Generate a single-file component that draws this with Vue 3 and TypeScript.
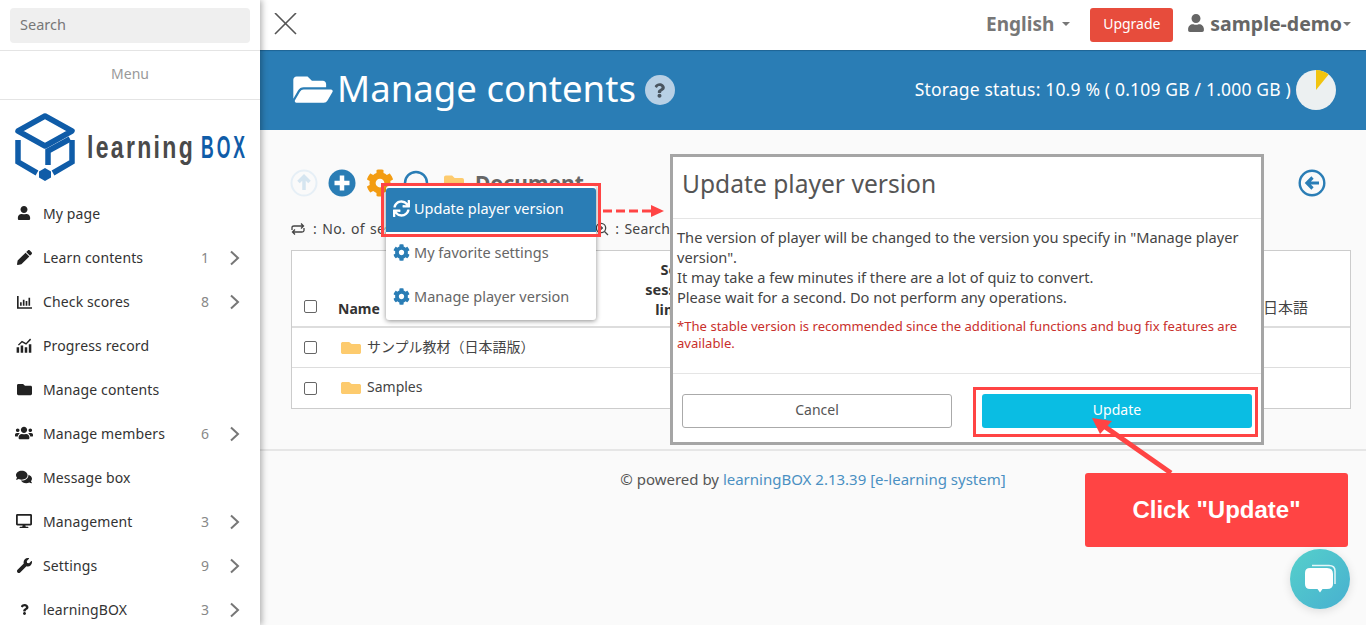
<script setup lang="ts">
const P = {
  user: 'M224 256c70.7 0 128-57.3 128-128S294.7 0 224 0 96 57.3 96 128s57.3 128 128 128zm89.6 32h-16.7c-22.2 10.2-46.9 16-72.9 16s-50.6-5.8-72.9-16h-16.7C60.2 288 0 348.2 0 422.4V464c0 26.5 21.5 48 48 48h352c26.5 0 48-21.5 48-48v-41.6c0-74.2-60.2-134.4-134.4-134.4z',
  pencil: 'M497.9 142.1l-46.1 46.1c-4.7 4.7-12.3 4.7-17 0l-111-111c-4.7-4.7-4.7-12.3 0-17l46.1-46.1c18.7-18.7 49.1-18.7 67.9 0l60.1 60.1c18.8 18.7 18.8 49.1 0 67.9zM284.2 99.8L21.6 362.4.4 483.9c-2.9 16.4 11.4 30.6 27.8 27.8l121.5-21.3 262.6-262.6c4.7-4.7 4.7-12.3 0-17l-111-111c-4.8-4.7-12.4-4.7-17.1 0z',
  chart: 'M0 64h56v384h456v56H0zM104 280h56v120h-56zM200 200h56v200h-56zM296 240h56v160h-56zM392 130h56v270h-56z',
  progress: 'M20 330h80v170H20zM150 270h80v230h-80zM280 330h80v170h-80zM410 230h80v270h-80zM60 250l130-130 130 70L450 50l34 34-160 160-130-70-100 100z',
  folder: 'M464 128H272l-64-64H48C21.49 64 0 85.49 0 112v288c0 26.51 21.49 48 48 48h416c26.51 0 48-21.49 48-48V176c0-26.51-21.49-48-48-48z',
  users: 'M96 224c35.3 0 64-28.7 64-64s-28.7-64-64-64-64 28.7-64 64 28.7 64 64 64zm448 0c35.3 0 64-28.7 64-64s-28.7-64-64-64-64 28.7-64 64 28.7 64 64 64zm32 32h-64c-17.6 0-33.5 7.1-45.1 18.6 40.3 22.1 68.9 62 75.1 109.4h66c17.7 0 32-14.3 32-32v-32c0-35.3-28.7-64-64-64zm-256 0c61.9 0 112-50.1 112-112S381.9 32 320 32 208 82.1 208 144s50.1 112 112 112zm76.8 32h-8.3c-20.8 10-43.9 16-68.5 16s-47.6-6-68.5-16h-8.3C179.6 288 128 339.6 128 403.2V432c0 26.5 21.5 48 48 48h288c26.5 0 48-21.5 48-48v-28.8c0-63.6-51.6-115.2-115.2-115.2zm-223.7-13.4C161.5 263.1 145.6 256 128 256H64c-35.3 0-64 28.7-64 64v32c0 17.7 14.3 32 32 32h65.9c6.3-47.4 34.9-87.3 75.2-109.4z',
  comments: 'M416 192c0-88.4-93.1-160-208-160S0 103.6 0 192c0 34.3 14.1 65.9 38 92-13.4 30.2-35.5 54.2-35.8 54.5-2.2 2.3-2.8 5.7-1.5 8.7S4.8 352 8 352c36.6 0 66.9-12.3 88.7-25 32.2 15.7 70.3 25 111.3 25 114.9 0 208-71.6 208-160zm122 220c23.9-26 38-57.7 38-92 0-66.9-53.5-124.2-129.3-148.1.9 6.6 1.3 13.3 1.3 20.1 0 105.9-107.7 192-240 192-10.8 0-21.3-.8-31.7-1.9C207.8 439.6 281.8 480 368 480c41 0 79.1-9.2 111.3-25 21.8 12.7 52.1 25 88.7 25 3.2 0 6.1-1.9 7.3-4.8 1.3-2.9.7-6.3-1.5-8.7-.3-.3-22.4-24.2-35.8-54.5z',
  desktop: 'M528 0H48C21.5 0 0 21.5 0 48v320c0 26.5 21.5 48 48 48h192l-16 48h-72c-13.3 0-24 10.7-24 24s10.7 24 24 24h272c13.3 0 24-10.7 24-24s-10.7-24-24-24h-72l-16-48h192c26.5 0 48-21.5 48-48V48c0-26.5-21.5-48-48-48zm-16 352H64V64h448z',
  wrench: 'M507.73 109.1c-2.24-9.03-13.54-12.09-20.12-5.51l-74.36 74.36-67.88-11.31-11.31-67.88 74.36-74.36c6.62-6.62 3.43-17.9-5.66-20.16-47.38-11.74-99.55.91-136.58 37.93-39.64 39.64-50.55 97.1-34.05 147.2L18.74 402.76c-24.99 24.99-24.99 65.51 0 90.5 24.99 24.99 65.51 24.99 90.5 0l213.21-213.21c50.12 16.71 107.47 5.68 147.37-34.22 37.07-37.07 49.7-89.32 37.91-136.73z',
  question: 'M202.021 0C122.202 0 70.503 32.703 29.914 91.026c-7.363 10.58-5.093 25.086 5.178 32.874l43.138 32.709c10.373 7.865 25.132 6.026 33.253-4.148 25.049-31.381 43.63-49.449 82.757-49.449 30.764 0 68.816 19.799 68.816 49.631 0 22.552-18.617 34.134-48.993 51.164-35.423 19.86-82.299 44.576-82.299 106.405V320c0 13.255 10.745 24 24 24h72.471c13.255 0 24-10.745 24-24v-5.773c0-42.86 125.268-44.645 125.268-160.627C377.504 66.256 286.902 0 202.021 0zM192 373.459c-38.196 0-69.271 31.075-69.271 69.271 0 38.195 31.075 69.27 69.271 69.27s69.271-31.075 69.271-69.271-31.075-69.27-69.271-69.27z',
  cog: 'M487.4 315.7l-42.6-24.6c4.3-23.2 4.3-47 0-70.2l42.6-24.6c4.9-2.8 7.1-8.6 5.5-14-11.1-35.6-30-67.8-54.7-94.6-3.8-4.1-10-5.1-14.8-2.3L380.8 110c-17.9-15.4-38.5-27.3-60.8-35.1V25.8c0-5.6-3.9-10.5-9.4-11.7-36.7-8.2-74.3-7.8-109.2 0-5.5 1.2-9.4 6.1-9.4 11.7V75c-22.2 7.9-42.8 19.8-60.8 35.1L88.7 85.5c-4.9-2.8-11-1.9-14.8 2.3-24.7 26.7-43.6 58.9-54.7 94.6-1.7 5.4.6 11.2 5.5 14L67.3 221c-4.3 23.2-4.3 47 0 70.2l-42.6 24.6c-4.9 2.8-7.1 8.6-5.5 14 11.1 35.6 30 67.8 54.7 94.6 3.8 4.1 10 5.1 14.8 2.3l42.6-24.6c17.9 15.4 38.5 27.3 60.8 35.1v49.2c0 5.6 3.9 10.5 9.4 11.7 36.7 8.2 74.3 7.8 109.2 0 5.5-1.2 9.4-6.1 9.4-11.7v-49.2c22.2-7.9 42.8-19.8 60.8-35.1l42.6 24.6c4.9 2.8 11 1.9 14.8-2.3 24.7-26.7 43.6-58.9 54.7-94.6 1.5-5.5-.7-11.3-5.6-14.1zM256 336c-44.1 0-80-35.9-80-80s35.9-80 80-80 80 35.9 80 80-35.9 80-80 80z',
  sync: 'M440.65 12.57l4 82.77A247.16 247.16 0 0 0 255.83 8C134.73 8 33.91 94.92 12.29 209.82A12 12 0 0 0 24.09 224h49.05a12 12 0 0 0 11.67-9.26 175.91 175.91 0 0 1 317-56.94l-101.46-4.86a12 12 0 0 0-12.57 12v47.41a12 12 0 0 0 12 12H500a12 12 0 0 0 12-12V12a12 12 0 0 0-12-12h-47.37a12 12 0 0 0-11.98 12.57zM255.83 432a175.61 175.61 0 0 1-146-77.8l101.8 4.87a12 12 0 0 0 12.57-12v-47.4a12 12 0 0 0-12-12H12a12 12 0 0 0-12 12V500a12 12 0 0 0 12 12h47.35a12 12 0 0 0 12-12.6l-4.15-82.57A247.17 247.17 0 0 0 255.83 504c121.11 0 221.93-86.92 243.55-201.82a12 12 0 0 0-11.8-14.18h-49.05a12 12 0 0 0-11.67 9.26A175.86 175.86 0 0 1 255.83 432z',
  open: 'M572.694 292.093L500.27 416.248A63.997 63.997 0 0 1 444.989 448H45.025c-18.523 0-30.064-20.093-20.731-36.093l72.424-124.155A64 64 0 0 1 152 256h399.964c18.523 0 30.064 20.093 20.73 36.093zM152 224h328v-48c0-26.51-21.49-48-48-48H272l-64-64H48C21.49 64 0 85.49 0 112v278.046l69.077-118.418C86.214 242.25 117.989 224 152 224z',
}

const menu = [
  { label: 'My page', d: P.user, vb: '0 0 448 512', w: 14 },
  { label: 'Learn contents', d: P.pencil, vb: '0 0 512 512', w: 15, n: 1 },
  { label: 'Check scores', d: P.chart, vb: '0 0 512 512', w: 15, n: 8 },
  { label: 'Progress record', d: P.progress, vb: '0 0 512 512', w: 16 },
  { label: 'Manage contents', d: P.folder, vb: '0 0 512 512', w: 15 },
  { label: 'Manage members', d: P.users, vb: '0 0 640 512', w: 18, n: 6 },
  { label: 'Message box', d: P.comments, vb: '0 0 576 512', w: 16 },
  { label: 'Management', d: P.desktop, vb: '0 0 576 512', w: 16, n: 3 },
  { label: 'Settings', d: P.wrench, vb: '0 0 512 512', w: 15, n: 9 },
  { label: 'learningBOX', d: P.question, vb: '0 0 384 512', w: 11, n: 3 },
]
const rows = ['サンプル教材（日本語版）', 'Samples']
const popItems = [
  { label: 'Update player version', d: P.sync, active: true },
  { label: 'My favorite settings', d: P.cog, active: false },
  { label: 'Manage player version', d: P.cog, active: false },
]
</script>

<template>
  <div class="page">
    <aside class="side">
      <div class="searchwrap"><div class="search">Search</div></div>
      <div class="menutitle">Menu</div>
      <div class="logo">
        <svg width="253" height="72" viewBox="0 0 253 72">
          <g fill="none" stroke="#0f5ca8" stroke-width="5.500">
            <path d="M38 4 65 19 38 34 11 19Z" stroke-linejoin="round"/>
            <path d="M11 28V50L30 61M65 28V50L46 61"/>
            <path d="M63 27 41 39V53"/>
          </g>
          <path d="M38 56l6 3.500v6l-6 3.500-6-3.500v-6z" fill="#0f5ca8"/>
          <text transform="translate(80 46) scale(.72 1)" class="lg1">learning</text>
          <text transform="translate(194 46) scale(.55 1)" class="lg2">BOX</text>
        </svg>
      </div>
      <nav class="nav">
        <div v-for="m in menu" :key="m.label" class="item">
          <span class="ic"><svg :width="m.w" :height="m.w" :viewBox="m.vb" fill="#222"><path :d="m.d"/></svg></span>
          <span class="lab">{{ m.label }}</span>
          <template v-if="m.n">
            <span class="num">{{ m.n }}</span>
            <svg class="chev" width="11" height="16" viewBox="0 0 11 16"><path d="M2 1.5 9 8 2 14.5" fill="none" stroke="#777" stroke-width="2"/></svg>
          </template>
        </div>
      </nav>
    </aside>

    <main class="main">
      <header class="top">
        <svg class="close" width="23" height="22" viewBox="0 0 23 22"><path d="M1 0 22 21M22 0 1 21" stroke="#555" stroke-width="1.6" fill="none"/></svg>
        <div class="topright">
          <span class="lang">English</span><i class="caret c1"></i>
          <span class="upg">Upgrade</span>
          <svg class="uic" width="16" height="18" viewBox="0 0 448 512" fill="#666"><path :d="P.user"/></svg>
          <span class="uname">sample-demo</span><i class="caret c2"></i>
        </div>
      </header>

      <section class="band">
        <svg width="40" height="35" viewBox="0 0 576 512" fill="#fff" class="bandic"><path :d="P.open"/></svg>
        <h1>Manage contents</h1>
        <span class="help"><svg width="11" height="15" viewBox="0 0 384 512" fill="#4a5560"><path :d="P.question"/></svg></span>
        <div class="storage">
          <span class="stxt">Storage status: 10.9 % ( 0.109 GB / 1.000 GB )</span>
          <svg width="40" height="40" viewBox="0 0 40 40"><circle cx="20" cy="20" r="20" fill="#ecf0f1"/><path d="M20 20V0A20 20 0 0 1 32.6 4.5Z" fill="#f1c40f"/></svg>
        </div>
      </section>

      <section class="content">
        <div class="tools">
          <svg width="28" height="28" viewBox="0 0 28 28" class="t1"><circle cx="14" cy="14" r="12.5" fill="none" stroke="#e6eff6" stroke-width="2"/><path d="M14 21V8M8.5 13 14 7.5 19.500 13" fill="none" stroke="#d5e5f0" stroke-width="3.500"/></svg>
          <svg width="28" height="28" viewBox="0 0 28 28" class="t2"><circle cx="14" cy="14" r="13.500" fill="#2a7db5"/><path d="M14 6.500V21.500M6.500 14H21.500" stroke="#fff" stroke-width="4.500"/></svg>
          <svg width="28" height="28" viewBox="0 0 512 512" fill="#f39c12" class="t3"><path :d="P.cog"/></svg>
          <svg width="26" height="26" viewBox="0 0 26 26" class="t4"><circle cx="13" cy="13" r="11" fill="none" stroke="#2a7db5" stroke-width="2.500"/></svg>
          <svg width="22" height="20" viewBox="0 0 512 512" fill="#fdcb6e" class="t5"><path :d="P.folder"/></svg>
          <span class="doc">Document</span>
          <svg width="28" height="28" viewBox="0 0 28 28" class="back"><circle cx="14" cy="14" r="12.300" fill="none" stroke="#2a7db5" stroke-width="2.400"/><path d="M21 14H10M14.500 8.500 9 14l5.500 5.500" fill="none" stroke="#2a7db5" stroke-width="3.200"/></svg>
        </div>
        <div class="legend">
          <svg width="14" height="12" viewBox="0 0 14 12" class="lg-i"><path d="M1 7V4.500Q1 3 3 3H12M10 .5 12.500 3 10 5.500M13 5V7.500Q13 9 11 9H2M4 6.500 1.500 9 4 11.500" fill="none" stroke="#444" stroke-width="1.300"/></svg>
          <span class="lgt">: No. of sessions</span>
          <span class="legend2"><svg width="14" height="14" viewBox="0 0 14 14"><circle cx="6" cy="6" r="4.700" fill="none" stroke="#444" stroke-width="1.300"/><path d="M9.500 9.500 13 13M4 6H8M6 4V8" stroke="#444" stroke-width="1.300"/></svg><span class="lgt">: Search</span></span>
        </div>
        <div class="tbl">
          <div class="thead">
            <span class="cb"></span>
            <span class="name">Name</span>
            <span class="limit">Set<br>session<br>limit</span>
            <span class="jp">日本語</span>
          </div>
          <div v-for="r in rows" :key="r" class="trow">
            <span class="cb"></span>
            <svg width="20" height="16" viewBox="0 0 512 512" fill="#fdcb6e" class="rf" preserveAspectRatio="none"><path :d="P.folder"/></svg>
            <span class="rt">{{ r }}</span>
          </div>
        </div>
      </section>

      <footer class="foot">© powered by <span class="lnk">learningBOX 2.13.39 [e-learning system]</span></footer>
    </main>

    <!-- overlays -->
    <div class="pop">
      <div v-for="p in popItems" :key="p.label" class="popitem" :class="{ on: p.active }">
        <svg width="17" height="17" viewBox="0 0 512 512" :fill="p.active ? '#fff' : '#2a7db5'"><path :d="p.d"/></svg>
        <span>{{ p.label }}</span>
      </div>
    </div>
    <div class="redbox r1"></div>

    <div class="dialog">
      <div class="dtitle">Update player version</div>
      <div class="dbody">
        <p>The version of player will be changed to the version you specify in "Manage player version".<br>It may take a few minutes if there are a lot of quiz to convert.<br>Please wait for a second. Do not perform any operations.</p>
        <p class="warn">*The stable version is recommended since the additional functions and bug fix features are available.</p>
      </div>
      <div class="dfoot">
        <span class="btn cancel">Cancel</span>
        <span class="btn update">Update</span>
      </div>
    </div>
    <div class="redbox r2"></div>

    <svg class="arrows" width="1366" height="625" viewBox="0 0 1366 625">
      <path d="M603 211H651" stroke="#ff4444" stroke-width="3" stroke-dasharray="9 4" fill="none"/>
      <path d="M651 205 664 211 651 217Z" fill="#ff4444"/>
      <path d="M1171 473 1101 424" stroke="#ff4444" stroke-width="5" fill="none"/>
      <path d="M1092 418 1112 421 1100 434Z" fill="#ff4444"/>
    </svg>

    <div class="callout">Click "Update"</div>

    <div class="chat">
      <svg width="36" height="34" viewBox="0 0 36 34">
        <path d="M10 3.500H27Q33 3.500 33 9V22" fill="none" stroke="#fff" stroke-width="1.500" opacity=".85"/>
        <path d="M8 6H25Q31 6 31 12V22Q31 27 25 27H20.500L18 30.500 15.500 27H8Q3 27 3 22V11Q3 6 8 6Z" fill="#fff"/>
      </svg>
    </div>
  </div>
</template>

<style>
html, body { margin: 0; height: 625px; overflow: hidden; background: #fafafa; }
</style>

<style scoped>
.page { position: relative; display: flex; width: 1366px; height: 625px; overflow: hidden; font-family: "Noto Sans", "Noto Sans CJK JP", sans-serif; font-size: 14px; color: #444; }
.side { width: 260px; flex: none; height: 625px; background: #fff; box-shadow: 2px 0 6px rgba(0,0,0,.3); position: relative; z-index: 3; }
.searchwrap { height: 51px; border-bottom: 1px solid #e4e4e4; padding: 8px 10px 0; box-sizing: border-box; }
.search { height: 35px; line-height: 33px; background: #efefef; border-radius: 4px; padding-left: 10px; color: #777; font-size: 14.5px; }
.menutitle { height: 49px; line-height: 46px; text-align: center; border-bottom: 1px solid #e4e4e4; color: #999; font-size: 14px; box-sizing: border-box; }
.logo { height: 92px; padding: 12px 0 0 7px; box-sizing: border-box; }
.logo svg { display: block; }
.lg1 { font-family: "Liberation Sans", sans-serif; font-weight: 700; font-size: 32px; letter-spacing: 3.200px; fill: #4a4a4a; }
.lg2 { font-family: "Liberation Sans", sans-serif; font-weight: 700; font-size: 32px; letter-spacing: 5.400px; fill: #0f5ca8; }
.item { height: 44px; display: flex; align-items: center; color: #333; }
.ic { width: 24px; margin: -2px 7px 0 12px; display: flex; justify-content: center; }
.ic svg { display: block; }
.lab { flex: 1; letter-spacing: .13px; margin-top: -2px; }
.num { color: #888; width: 20px; text-align: center; margin: -2px 14px 0 0; }
.chev { margin-right: 20px; }
.main { flex: 1; display: flex; flex-direction: column; min-width: 0; }
.top { height: 50px; flex: none; background: #fff; display: flex; align-items: center; padding: 0 15px 4px 14px; box-sizing: border-box; }
.close { margin-top: 1px; }
.topright { margin-left: auto; display: flex; align-items: center; }
.lang { font-weight: 700; font-size: 19px; color: #777; margin-top: 1px; }
.uname { font-weight: 700; font-size: 19.5px; color: #666; margin-left: 6px; }
.caret { display: block; width: 0; height: 0; border-left: 4px solid transparent; border-right: 4px solid transparent; border-top: 4px solid #777; margin-top: 2px; }
.c1 { margin-left: 8px; margin-right: 20px; }
.c2 { margin-left: 1px; }
.upg { width: 83px; height: 34px; line-height: 31px; text-align: center; background: #e74c3c; color: #fff; border-radius: 3px; font-size: 14px; margin: 4px 15px 0 0; }
.uic { display: block; }
.band { height: 80px; flex: none; background: #2a7db5; box-shadow: inset 0 2px 1px -1px #1f6494; display: flex; align-items: center; padding: 0 30px 0 33px; color: #fff; box-sizing: border-box; }
.bandic { margin: -2px 4px 0 0; }
.band h1 { margin: -4px 9px 0 0; font-size: 36.6px; font-weight: 400; line-height: 1; }
.help { width: 30px; height: 30px; border-radius: 50%; background: #b8d0e5; display: flex; align-items: center; justify-content: center; }
.storage { margin-left: auto; display: flex; align-items: center; gap: 5px; font-size: 17.5px; }
.stxt { letter-spacing: .18px; margin-top: -2px; }
.content { height: 321px; flex: none; background: #fafafa; border-bottom: 2px solid #e6e6e6; padding: 39px 15px 0 30px; box-sizing: border-box; }
.tools { height: 28px; display: flex; align-items: center; }
.t2 { margin-left: 10px; }
.t3 { margin-left: 10px; }
.t4 { margin-left: 9px; }
.t5 { margin-left: 14px; }
.doc { margin-left: 10px; font-size: 21px; font-weight: 700; color: #666; }
.back { margin-left: auto; margin-right: 25px; }
.legend { margin-top: 21px; height: 22px; display: flex; align-items: center; font-size: 14px; color: #444; }
.lg-i { margin-right: 8px; margin-left: 1px; }
.lgt { word-spacing: 1.5px; letter-spacing: .2px; margin-top: -2px; }
.legend2 { margin-left: 168px; display: flex; align-items: center; gap: 6px; }
.tbl { margin: 10px 0 0 1px; width: 1060px; height: 159px; box-sizing: border-box; border: 1px solid #ccc; background: #fff; }
.thead { height: 77px; border-bottom: 2px solid #ddd; display: flex; align-items: flex-end; padding: 0 0 7px 12px; box-sizing: border-box; }
.cb { width: 11px; height: 11px; border: 1px solid #666; border-radius: 2px; background: #fff; flex: none; display: block; margin-right: 21px; }
.thead .cb { margin-bottom: 6px; }
.name { font-weight: 700; width: 300px; color: #333; line-height: 20px; }
.limit { width: 68px; text-align: center; font-weight: 700; line-height: 20px; color: #333; font-size: 14.5px; }
.jp { margin-left: auto; margin-right: 42px; margin-bottom: 2px; line-height: 20px; font-size: 15px; }
.trow { height: 40px; display: flex; align-items: center; padding-left: 12px; border-bottom: 1px solid #ddd; box-sizing: border-box; }
.trow:last-child { border-bottom: 0; }
.rf { margin: 0 6px 0 3px; }
.rt { margin-top: -3px; }
.foot { flex: 1; padding-top: 18px; text-align: center; font-size: 15px; line-height: 20px; color: #555; background: #fafafa; box-sizing: border-box; }
.lnk { color: #4a90c2; }

.pop { position: absolute; left: 386px; top: 186px; width: 210px; height: 134px; background: #fff; border-radius: 3px; box-shadow: 0 1px 5px rgba(0,0,0,.45); z-index: 4; padding-top: 2px; box-sizing: border-box; }
.popitem { height: 44px; display: flex; align-items: center; padding: 0 0 4px 7px; gap: 4px; color: #666; font-size: 14.5px; box-sizing: border-box; }
.popitem.on { background: #2a7db5; color: #fff; border-radius: 3px 3px 0 0; }
.redbox { position: absolute; border: 3px solid #ff4444; box-sizing: border-box; z-index: 6; }
.r1 { left: 381px; top: 183px; width: 220px; height: 54px; }
.r2 { left: 973px; top: 387px; width: 285px; height: 50px; }
.dialog { position: absolute; left: 670px; top: 154px; width: 594px; height: 291px; box-sizing: border-box; border: 3px solid #a5a5a5; background: #fff; z-index: 5; display: flex; flex-direction: column; }
.dtitle { height: 62px; line-height: 54px; padding-left: 9px; font-size: 24.6px; color: #555; border-bottom: 1px solid #e5e5e5; box-sizing: border-box; flex: none; }
.dbody { height: 155px; flex: none; padding: 8px 4px 0; box-sizing: border-box; border-bottom: 1px solid #e5e5e5; color: #444; font-size: 14.6px; line-height: 20px; }
.dbody p { margin: 0; }
.warn { color: #c9302c; font-size: 13.1px; line-height: 17px; margin-top: 11px !important; }
.dfoot { flex: 1; display: flex; justify-content: space-between; padding: 20px 9px 0; }
.btn { width: 270px; height: 34px; line-height: 32px; text-align: center; border-radius: 3px; box-sizing: border-box; }
.cancel { border: 1px solid #aaa; color: #555; line-height: 30px; }
.update { background: #0abde3; color: #fff; }
.arrows { position: absolute; left: 0; top: 0; z-index: 7; pointer-events: none; }
.callout { position: absolute; left: 1085px; top: 473px; width: 263px; height: 74px; line-height: 74px; text-align: center; background: #ff4444; border-radius: 3px; color: #fff; font-family: "Liberation Sans", sans-serif; font-weight: 700; font-size: 24px; z-index: 8; }
.chat { position: absolute; left: 1290px; top: 549px; width: 60px; height: 60px; border-radius: 50%; background: linear-gradient(135deg, #55d0cb, #48b0d0); box-shadow: 0 2px 10px rgba(0,0,0,.12); display: flex; align-items: center; justify-content: center; z-index: 8; }
</style>
